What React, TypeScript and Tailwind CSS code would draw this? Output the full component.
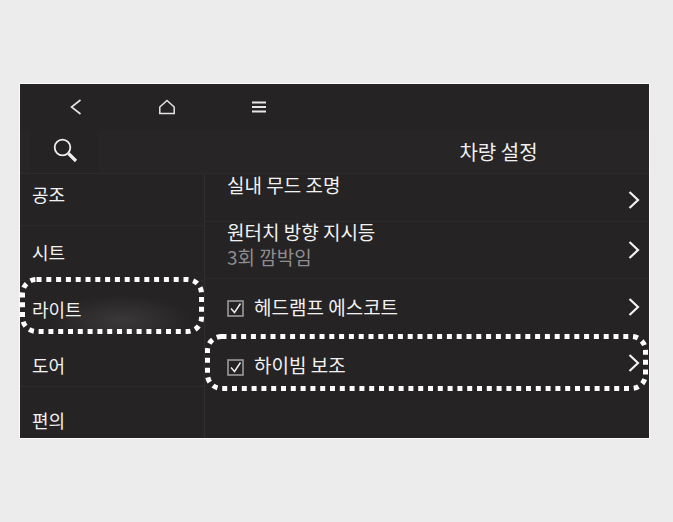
const fontStack = { fontFamily: '"Noto Sans CJK KR", "Noto Sans", sans-serif' };

const sideItems = [
  { label: "공조", cls: "h-[52px] pt-[4px]", line: true },
  { label: "시트", cls: "h-[55px] pt-[10px]", line: true },
  { label: "라이트", cls: "h-[53px] pt-[12px]", line: false, active: true },
  { label: "도어", cls: "h-[53px] pt-[15px]", line: true },
  { label: "편의", cls: "h-[51px] pt-[17px]", line: false },
];

function Chevron() {
  return (
    <svg width="14" height="20" viewBox="0 0 14 20" fill="none" className="shrink-0">
      <path d="M2.5 2 L11 10 L2.5 18" stroke="#f2f2f2" strokeWidth="2.2" />
    </svg>
  );
}

function Check({ className }: { className: string }) {
  return (
    <svg width="17" height="17" viewBox="0 0 17 17" fill="none" className={`shrink-0 ${className}`}>
      <rect x="1" y="1" width="15" height="15" stroke="#9b9b9b" strokeWidth="1.6" />
      <path d="M4 8.5 L7.5 12.5 L13.5 3.5" stroke="#f0f0f0" strokeWidth="1.4" />
    </svg>
  );
}

// dotted highlight ring drawn over a row
function DottedRing({ w, h, className }: { w: number; h: number; className: string }) {
  return (
    <svg width={w} height={h} className={`absolute left-0 pointer-events-none overflow-visible ${className}`}>
      <rect
        x="2.5"
        y="2.5"
        width={w - 5}
        height={h - 5}
        rx="14"
        fill="none"
        stroke="#ffffff"
        strokeWidth="5"
        strokeDasharray="5 4.8"
      />
    </svg>
  );
}

export default function App() {
  return (
    <div className="min-h-[522px] bg-[#ececec] pt-[83px]" style={fontStack}>
      <div className="ml-[19px] w-[631px] border-[1px] border-[#fafafa]">
        <div className="h-[354px] bg-[#252324] flex flex-col overflow-hidden">
          {/* top nav */}
          <div className="h-[46px] flex items-center shrink-0">
            <svg width="14" height="18" viewBox="0 0 14 18" fill="none" className="ml-[49px]">
              <path d="M11.5 2 L2.5 9 L11.5 16" stroke="#e6e6e6" strokeWidth="1.6" />
            </svg>
            <svg width="18" height="16" viewBox="0 0 18 16" fill="none" className="ml-[75px]">
              <path d="M9 1.5 L16.2 8 V14.5 H1.8 V8 Z" stroke="#e6e6e6" strokeWidth="1.5" />
            </svg>
            <svg width="16" height="12" viewBox="0 0 16 12" fill="none" className="ml-[75px]">
              <path d="M1 1.5 H15 M1 6 H15 M1 10.5 H15" stroke="#e6e6e6" strokeWidth="1.8" />
            </svg>
          </div>

          {/* search + title */}
          <div className="h-[44px] flex items-center shrink-0 bg-[#272526] border-b border-[#2d2b2c]">
            <div className="w-[69px] h-full ml-[10px] pl-[22px] pb-[4px] flex items-center bg-[#252324]">
              <svg width="26" height="26" viewBox="0 0 26 26" fill="none">
                <circle cx="10.5" cy="10.5" r="7.8" stroke="#efefef" strokeWidth="1.8" />
                <path d="M16.5 16.5 L24 24" stroke="#efefef" strokeWidth="3.2" />
              </svg>
            </div>
            <div className="flex-1 text-center text-[#f0f0f0] text-[20px] leading-none pl-[320px]">차량 설정</div>
            <div className="w-[71px]" />
          </div>

          <div className="flex flex-1 min-h-0">
            {/* sidebar */}
            <div className="w-[185px] shrink-0 border-r border-[#302e2f]">
              {sideItems.map((item) => (
                <div
                  key={item.label}
                  className={`relative pl-[12px] text-[18px] leading-[32px] text-[#f2f2f2] ${item.cls} ${item.line ? "border-b border-[#2c2a2b]" : ""} ${item.active ? "bg-[radial-gradient(ellipse_70px_26px_at_55%_75%,#3a3839,#252324)]" : ""}`}
                >
                  {item.label}
                  {item.active && <DottedRing w={184} h={57} className="top-[-4px]" />}
                </div>
              ))}
            </div>

            {/* list */}
            <div className="flex-1 min-w-0 text-[#f2f2f2] text-[19px]">
              <div className="h-[48px] pl-[22px] pr-[8px] flex justify-between border-b border-[#2c2a2b]">
                <span className="leading-[24px] -mt-[1px]">실내 무드 조명</span>
                <span className="pt-[16px]"><Chevron /></span>
              </div>
              <div className="h-[57px] pl-[22px] pr-[8px] flex justify-between items-center border-b border-[#2c2a2b]">
                <div className="mb-[11px]">
                  <div className="leading-[24px]">원터치 방향 지시등</div>
                  <div className="leading-[26px] text-[#8f8d8e]">3회 깜박임</div>
                </div>
                <Chevron />
              </div>
              <div className="h-[55px] pl-[22px] pr-[8px] flex items-center justify-between">
                <div className="flex items-center gap-[10px] pt-[2px]">
                  <Check className="mt-[2px]" />
                  <span>헤드램프 에스코트</span>
                </div>
                <Chevron />
              </div>
              <div className="relative h-[57px] pl-[22px] pr-[8px] flex items-center justify-between">
                <div className="flex items-center gap-[10px] pt-[6px]">
                  <Check className="mt-[4px]" />
                  <span>하이빔 보조</span>
                </div>
                <Chevron />
                <DottedRing w={443} h={57} className="top-0" />
              </div>
            </div>
          </div>
        </div>
      </div>
    </div>
  );
}
